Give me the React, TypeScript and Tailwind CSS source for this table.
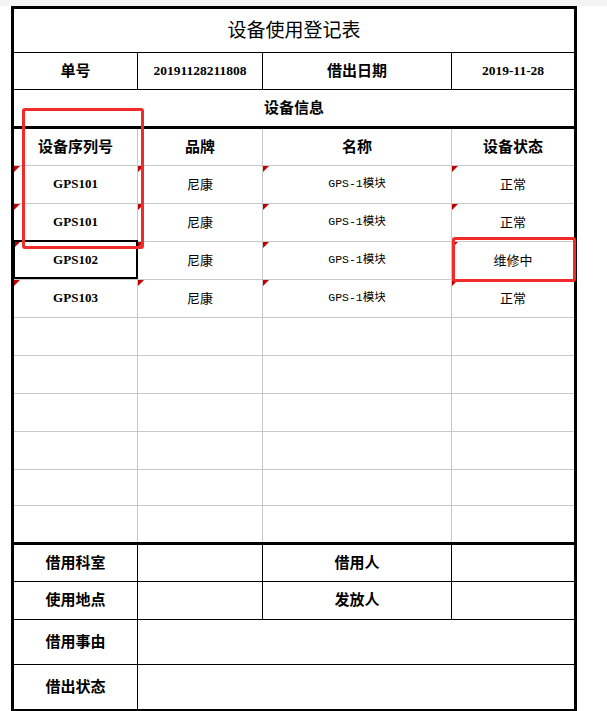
const cjk = "font-['Noto_Sans_CJK_SC',sans-serif]"
const serif = "font-['Liberation_Serif','Noto_Sans_CJK_SC',serif]"
const mono = "font-['Liberation_Mono','Noto_Sans_CJK_SC',monospace]"
const label = `${cjk} font-bold text-[15px] pb-[2px]`

const cols = ['w-[124px]', 'w-[125px]', 'w-[189px]', 'w-[122px]']

interface Item {
  serial: string
  brand: string
  name: string
  status: string
}

const items: Item[] = [
  { serial: 'GPS101', brand: '尼康', name: 'GPS-1模块', status: '正常' },
  { serial: 'GPS101', brand: '尼康', name: 'GPS-1模块', status: '正常' },
  { serial: 'GPS102', brand: '尼康', name: 'GPS-1模块', status: '维修中' },
  { serial: 'GPS103', brand: '尼康', name: 'GPS-1模块', status: '正常' },
]

const rowHeights = [38, 38, 38, 38, 38, 38, 38, 38, 36, 36]

function Mark() {
  return (
    <span className="absolute left-0 top-0 w-0 h-0 border-t-[6px] border-r-[6px] border-t-[#c00000] border-r-transparent" />
  )
}

function DataRow({ item, height, last }: { item?: Item; height: number; last: boolean }) {
  const cells = item
    ? [
        <span className={`${serif} font-bold text-[13px]`}>{item.serial}</span>,
        <span className={`${cjk} text-[13px]`}>{item.brand}</span>,
        <span className={`${mono} text-[11.5px]`}>{item.name}</span>,
        <span className={`${cjk} text-[13px]`}>{item.status}</span>,
      ]
    : [null, null, null, null]
  return (
    <div
      className={`flex ${last ? '' : 'border-b border-[#c8c8c8]'}`}
      style={{ height }}
    >
      {cells.map((c, i) => (
        <div
          key={i}
          className={`${cols[i]} relative flex items-center justify-center pb-px text-black ${i < 3 ? 'border-r border-[#c8c8c8]' : ''}`}
        >
          {item && <Mark />}
          {c}
        </div>
      ))}
    </div>
  )
}

export default function App() {
  return (
    <div className="relative w-[607px] h-[711px] bg-white overflow-hidden">
      <div className="h-[6px] bg-[#f3f4f6]" />
      <div className="ml-[11px] w-[566px] border-[3px] border-black text-black">
        {/* title */}
        <div className={`h-[44px] border-b border-black flex items-center justify-center ${cjk} text-[19px] pb-[2px]`}>
          设备使用登记表
        </div>

        {/* number / date */}
        <div className="h-[37px] border-b border-black flex">
          <div className={`${cols[0]} border-r border-black flex items-center justify-center ${label}`}>单号</div>
          <div className={`${cols[1]} border-r border-black flex items-center justify-center ${serif} font-bold text-[13.5px]`}>20191128211808</div>
          <div className={`${cols[2]} border-r border-black flex items-center justify-center ${label}`}>借出日期</div>
          <div className={`${cols[3]} flex items-center justify-center ${serif} font-bold text-[13.5px]`}>2019-11-28</div>
        </div>

        {/* section */}
        <div className={`h-[39px] border-b-[3px] border-black flex items-center justify-center ${label}`}>
          设备信息
        </div>

        {/* header */}
        <div className="h-[37px] border-b border-[#c8c8c8] flex">
          {['设备序列号', '品牌', '名称', '设备状态'].map((h, i) => (
            <div
              key={h}
              className={`${cols[i]} flex items-center justify-center ${label} ${i < 3 ? 'border-r border-[#c8c8c8]' : ''}`}
            >
              {h}
            </div>
          ))}
        </div>

        {rowHeights.map((h, i) => (
          <DataRow key={i} item={items[i]} height={h} last={i === rowHeights.length - 1} />
        ))}

        {/* bottom info */}
        <div className="border-t-[3px] border-black">
          <div className="h-[37px] border-b border-black flex">
            <div className={`${cols[0]} border-r border-black flex items-center justify-center ${label}`}>借用科室</div>
            <div className={`${cols[1]} border-r border-black`} />
            <div className={`${cols[2]} border-r border-black flex items-center justify-center ${label}`}>借用人</div>
            <div className={cols[3]} />
          </div>
          <div className="h-[38px] border-b border-black flex">
            <div className={`${cols[0]} border-r border-black flex items-center justify-center ${label}`}>使用地点</div>
            <div className={`${cols[1]} border-r border-black`} />
            <div className={`${cols[2]} border-r border-black flex items-center justify-center ${label}`}>发放人</div>
            <div className={cols[3]} />
          </div>
          <div className="h-[45px] border-b border-black flex">
            <div className={`${cols[0]} border-r border-black flex items-center justify-center ${label}`}>借用事由</div>
            <div className="flex-1" />
          </div>
          <div className="h-[45px] border-b border-black flex">
            <div className={`${cols[0]} border-r border-black flex items-center justify-center ${label}`}>借出状态</div>
            <div className="flex-1" />
          </div>
        </div>
      </div>

      {/* selected cell */}
      <div className="absolute left-[13px] top-[240px] w-[125px] h-[39px] border-2 border-black pointer-events-none" />

      {/* annotations */}
      <div className="absolute left-[22px] top-[108px] w-[122px] h-[141px] border-[3px] border-[#f22a2a] rounded-[3px] pointer-events-none" />
      <div className="absolute left-[452px] top-[237px] w-[124px] h-[45px] border-[3px] border-[#f22a2a] rounded-[3px] pointer-events-none" />
    </div>
  )
}
